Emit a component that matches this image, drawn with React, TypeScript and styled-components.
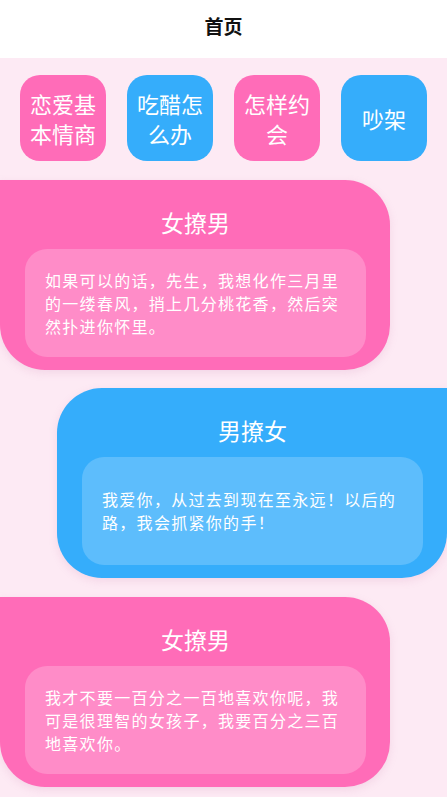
import { createGlobalStyle, styled } from "styled-components";

const GlobalStyle = createGlobalStyle`
    html, body {
        margin: 0;
        padding: 0;
        background: #fdeaf4;
    }
    body {
        font-family: "Noto Sans CJK SC", "Noto Sans", sans-serif;
        width: 447px;
        overflow-x: hidden;
    }
`;

const Header = styled.header`
    height: 58px;
    box-sizing: border-box;
    padding-bottom: 8px;
    background: #ffffff;
    display: flex;
    align-items: center;
    justify-content: center;
    font-size: 19px;
    font-weight: 700;
    color: #111111;
`;

const Page = styled.main`
    background: #fdeaf4;
    min-height: 739px;
    padding-bottom: 14px;
`;

const Menu = styled.nav`
    display: flex;
    gap: 21px;
    padding: 17px 20px 0;
`;

const MenuButton = styled.button<{ $blue?: boolean }>`
    width: 86px;
    height: 86px;
    border: none;
    border-radius: 20px;
    background: ${(props) => (props.$blue ? "#35adfb" : "#ff6cb8")};
    color: #ffffff;
    font-family: inherit;
    font-size: 22px;
    line-height: 30px;
    padding: 0 10px;
    display: flex;
    align-items: center;
    justify-content: center;
    text-align: center;
`;

const Card = styled.section<{ $blue?: boolean }>`
    width: 390px;
    margin-top: ${(props) => (props.$blue ? "18px" : "19px")};
    margin-left: ${(props) => (props.$blue ? "57px" : "0")};
    box-sizing: border-box;
    padding: 27px 24px 13px 25px;
    background: ${(props) => (props.$blue ? "#35adfb" : "#ff6cb8")};
    border-radius: ${(props) => (props.$blue ? "45px 0 45px 45px" : "0 45px 45px 45px")};
    box-shadow: 0 3px 8px rgba(200, 120, 170, 0.18);
`;

const CardTitle = styled.h2`
    margin: 0 0 12px;
    height: 30px;
    line-height: 30px;
    font-size: 23px;
    font-weight: 400;
    color: #ffffff;
    text-align: center;
`;

const Quote = styled.div<{ $blue?: boolean }>`
    height: 108px;
    box-sizing: border-box;
    padding: 0 20px;
    border-radius: 22px;
    background: ${(props) => (props.$blue ? "#5dbdfc" : "#ff8cc8")};
    display: flex;
    align-items: center;
    color: #ffffff;
    font-size: 16px;
    letter-spacing: 1.3px;
    line-height: 23px;
`;

const QuoteText = styled.p`
    margin: 0;
`;

const menus = [
    { text: "恋爱基本情商", blue: false },
    { text: "吃醋怎么办", blue: true },
    { text: "怎样约会", blue: false },
    { text: "吵架", blue: true },
];

const cards = [
    { title: "女撩男", blue: false, text: "如果可以的话，先生，我想化作三月里的一缕春风，捎上几分桃花香，然后突然扑进你怀里。" },
    { title: "男撩女", blue: true, text: "我爱你，从过去到现在至永远！以后的路，我会抓紧你的手！" },
    { title: "女撩男", blue: false, text: "我才不要一百分之一百地喜欢你呢，我可是很理智的女孩子，我要百分之三百地喜欢你。" },
];

function App() {
    return (
        <>
            <GlobalStyle />
            <Header>首页</Header>
            <Page>
                <Menu>
                    {menus.map((m) => (
                        <MenuButton key={m.text} $blue={m.blue}>{m.text}</MenuButton>
                    ))}
                </Menu>
                {cards.map((c, i) => (
                    <Card key={i} $blue={c.blue}>
                        <CardTitle>{c.title}</CardTitle>
                        <Quote $blue={c.blue}>
                            <QuoteText>{c.text}</QuoteText>
                        </Quote>
                    </Card>
                ))}
            </Page>
        </>
    );
}

export default App;
